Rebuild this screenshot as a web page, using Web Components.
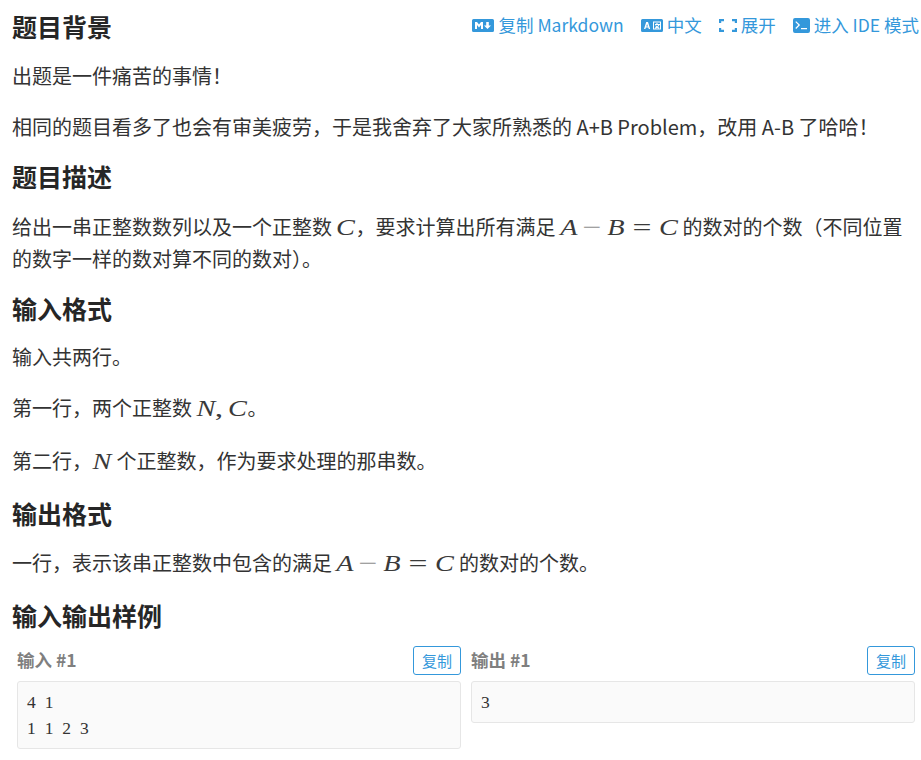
<!DOCTYPE html>
<html lang="zh"><head><meta charset="utf-8">
<style>
html,body{margin:0;background:#fff}
body{font-family:"Noto Sans CJK SC","Open Sans",sans-serif;font-size:20px;line-height:32px;color:#333}
</style></head><body>
<template id="t-article"><style>:host{display:block;padding:7px 2px 0 12px;width:907px;overflow:hidden}</style><slot></slot></template>
<template id="t-head"><style>:host{display:flex;justify-content:space-between;align-items:flex-start;margin-bottom:14px}
:host(.first){margin-bottom:15px}
:host(.m1){margin-bottom:15px}
:host(.m2){margin-bottom:16px}
:host(.tight){margin-bottom:12px}
h2{margin:0;font-size:25px;line-height:38px;font-weight:700;color:#262626}
</style><h2><slot></slot></h2><slot name="tools"></slot></template>
<template id="t-para"><style>:host{display:block;margin-bottom:19px}:host(.last){margin-bottom:14px}:host(.mid){margin-bottom:21px}:host(.end){margin-bottom:17px}</style><slot></slot></template>
<template id="t-math"><style>:host{display:inline-block;font-family:"Liberation Serif",serif;font-size:24px;line-height:24px;color:#3a3a3a;font-style:italic;white-space:nowrap}</style><slot></slot></template>
<template id="t-sym"><style>:host{display:inline-block;text-align:center;transform:scaleX(1.18)}
:host(.op){font-style:normal;transform:scaleX(1.4)}
:host(.minus){color:#8c8c8c}</style><slot></slot></template>
<template id="t-tools"><style>:host{display:flex;gap:17px;font-size:17.5px;line-height:32px;white-space:nowrap;margin-top:2px}</style><slot></slot></template>
<template id="t-tool"><style>:host{display:flex;align-items:center;gap:4px;color:#3498db}
::slotted(svg){display:block;fill:#3498db}</style><slot name="icon"></slot><slot></slot></template>
<template id="t-sample"><style>:host{display:grid;grid-template-columns:444px 444px;column-gap:10px;margin-left:5px;align-items:start}</style><slot></slot></template>
<template id="t-io"><style>:host{display:block;min-width:0}
.h{display:flex;justify-content:space-between;align-items:flex-start;height:29px;margin-bottom:6px}
.t{font-weight:700;font-size:17.5px;line-height:28px;color:#7f7f7f}
button{all:unset;box-sizing:border-box;width:48px;height:29px;border:1px solid #3498db;border-radius:3px;color:#3498db;font-size:15px;line-height:27px;text-align:center;font-family:inherit}
pre{margin:0;box-sizing:border-box;background:#fafafa;border:1px solid #e6e6e6;border-radius:3px;padding:7px 9px 7px;font:17.5px/26px "Liberation Serif",serif;word-spacing:4.5px;color:#333}
</style><div class="h"><span class="t"><slot name="title"></slot></span><button>复制</button></div><pre><slot></slot></pre></template>
<script>
function def(tag,tid){customElements.define(tag,class extends HTMLElement{constructor(){super();this.attachShadow({mode:"open"}).appendChild(document.getElementById(tid).content.cloneNode(true));}});}
def("prob-article","t-article");def("prob-head","t-head");def("prob-para","t-para");def("prob-math","t-math");def("prob-sym","t-sym");def("prob-tools","t-tools");def("prob-tool","t-tool");def("prob-sample","t-sample");def("prob-io","t-io");
</script>
<prob-article>
<prob-head class="first">题目背景
<prob-tools slot="tools">
<prob-tool><svg slot="icon" width="22" height="13" viewBox="0 0 22 13"><path fill-rule="evenodd" d="M1.5 0h19A1.5 1.5 0 0 1 22 1.500v10a1.500 1.500 0 0 1-1.500 1.500h-19A1.500 1.500 0 0 1 0 11.500v-10A1.500 1.500 0 0 1 1.500 0zM3 10V3h2l2 2.600L9 3h2v7H9V6L7 8.600 5 6v4zm12.500 0 3.500-3.600h-2.200V3h-2.600v3.400H12z"/></svg>复制 Markdown</prob-tool>
<prob-tool><svg slot="icon" width="22" height="13" viewBox="0 0 22 13"><path fill-rule="evenodd" d="M1.500 0h19A1.500 1.500 0 0 1 22 1.500v10a1.500 1.500 0 0 1-1.500 1.500h-19A1.500 1.500 0 0 1 0 11.500v-10A1.500 1.500 0 0 1 1.500 0zM3 10h1.400l.5-1.400h2.400l.5 1.400h1.400L7 3H5.200zM5.300 7.400l.8-2.500.8 2.500zM12 2.500v8h8v-8zm1 1h6v6h-6zm2.400.5v1H14v1h3.300c-.3.600-.7 1.100-1.200 1.500a5 5 0 0 1-.9-1h-1.100c.3.600.7 1.100 1.100 1.600-.4.200-.8.400-1.300.5l.4.900c.7-.2 1.300-.5 1.800-.8.500.4 1.100.7 1.800.8l.4-.9c-.5-.1-.9-.3-1.300-.5.600-.6 1.100-1.300 1.400-2.100h.6v-1h-2.500V4z"/></svg>中文</prob-tool>
<prob-tool><svg slot="icon" width="18" height="13" viewBox="0 0 18 13"><path d="M0 0h5v2.200H2.200V4H0zM13 0h5v4h-2.200V2.200H13zM0 9h2.200v1.800H5V13H0zM15.800 9H18v4h-5v-2.200h2.800z"/></svg>展开</prob-tool>
<prob-tool><svg slot="icon" width="17" height="15" viewBox="0 0 17 15"><path fill-rule="evenodd" d="M2 0h13a2 2 0 0 1 2 2v11a2 2 0 0 1-2 2H2a2 2 0 0 1-2-2V2a2 2 0 0 1 2-2zm1.200 3.200L2.300 4.100 5.300 7 2.300 10l.9.900L7.100 7zM8 10v1.200h6V10z"/></svg>进入 IDE 模式</prob-tool>
</prob-tools></prob-head>
<prob-para>出题是一件痛苦的事情！</prob-para>
<prob-para class="last">相同的题目看多了也会有审美疲劳，于是我舍弃了大家所熟悉的 A+B Problem，改用 A-B 了哈哈！</prob-para>
<prob-head class="m2">题目描述</prob-head>
<prob-para class="last">给出一串正整数数列以及一个正整数 <prob-math><prob-sym style="width:19px">C</prob-sym></prob-math>，要求计算出所有满足 <prob-math><prob-sym style="width:18px;margin-right:6px">A</prob-sym><prob-sym class="op minus" style="width:16px;margin-right:7px">−</prob-sym><prob-sym style="width:18px;margin-right:7px">B</prob-sym><prob-sym class="op" style="width:20px;margin-right:7px">=</prob-sym><prob-sym style="width:19px">C</prob-sym></prob-math> <span>的数对的个数（不同位置</span><span>的数字一样的数对算不同的数对）。</span></prob-para>
<prob-head>输入格式</prob-head>
<prob-para>输入共两行。</prob-para>
<prob-para class="mid">第一行，两个正整数 <prob-math><prob-sym style="width:20px">N</prob-sym><prob-sym class="op" style="width:6px;margin-right:6px">,</prob-sym><prob-sym style="width:19px">C</prob-sym></prob-math>。</prob-para>
<prob-para class="end">第二行，<prob-math><prob-sym style="width:20px">N</prob-sym></prob-math> 个正整数，作为要求处理的那串数。</prob-para>
<prob-head class="m1">输出格式</prob-head>
<prob-para class="end">一行，表示该串正整数中包含的满足 <prob-math><prob-sym style="width:18px;margin-right:6px">A</prob-sym><prob-sym class="op minus" style="width:16px;margin-right:7px">−</prob-sym><prob-sym style="width:18px;margin-right:7px">B</prob-sym><prob-sym class="op" style="width:20px;margin-right:7px">=</prob-sym><prob-sym style="width:19px">C</prob-sym></prob-math> 的数对的个数。</prob-para>
<prob-head class="tight">输入输出样例</prob-head>
<prob-sample>
<prob-io><span slot="title">输入 #1</span>4 1
1 1 2 3</prob-io>
<prob-io><span slot="title">输出 #1</span>3</prob-io>
</prob-sample>
</prob-article>
</body></html>
